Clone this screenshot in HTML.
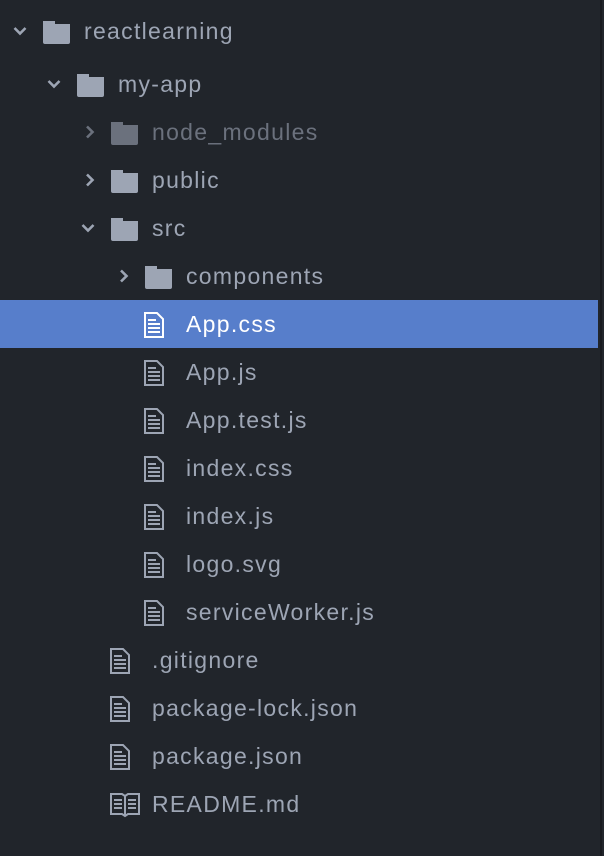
<!DOCTYPE html>
<html><head><style>
body{margin:0;width:604px;height:856px;background:#21252b;overflow:hidden;position:relative;font-family:"Liberation Sans",sans-serif;}
.border{position:absolute;left:600px;top:0;width:2px;height:856px;background:#181a1f}
.r{position:absolute;left:0;width:598px;height:48px;}
.r.sel{background:#577ecb}
.r span.t{position:absolute;top:0;line-height:48px;font-size:23px;color:#9da5b4;letter-spacing:1.3px}
.sel span.t{color:#fff}
.dim span.t{color:#6b717d}
.r svg{position:absolute}
</style></head><body>
<div class="border"></div>
<svg width="0" height="0" style="position:absolute">
<defs>
<symbol id="fold" viewBox="0 0 28 24"><path d="M1 4h27v18a2 2 0 0 1-2 2H3a2 2 0 0 1-2-2z M2 1h10v3H2z" fill="currentColor"/><path d="M1.5 4V1.5h11V4" fill="none" stroke="currentColor" stroke-width="1"/></symbol>
<symbol id="file" viewBox="0 0 20 26"><path d="M1 1h12l6 6v18H1z" fill="none" stroke="currentColor" stroke-width="2"/><path d="M4 8h8M4 12h12M4 16h12M4 20h12" stroke="currentColor" stroke-width="2"/></symbol>
<symbol id="book" viewBox="0 0 30 26"><path d="M1 2h11l3 2 3-2h11v20H18l-3 2-3-2H1z M15 4v20" fill="none" stroke="currentColor" stroke-width="2"/><path d="M4 8h8M4 12h8M4 16h8M18 8h8M18 12h8M18 16h8" stroke="currentColor" stroke-width="2"/></symbol>
<symbol id="down" viewBox="0 0 14 10"><path d="M1.5 2l5.5 5.5 5.5-5.5" fill="none" stroke="currentColor" stroke-width="2.6"/></symbol>
<symbol id="right" viewBox="0 0 10 14"><path d="M2 1.5l5.5 5.5-5.5 5.5" fill="none" stroke="currentColor" stroke-width="2.6"/></symbol>
</defs></svg>

<div class="r" style="top:7px"><svg style="left:13px;top:19px;color:#9da5b4" width="14" height="10"><use href="#down"/></svg><svg style="left:42px;top:13px;color:#9da5b4" width="28" height="24"><use href="#fold"/></svg><span class="t" style="left:84px">reactlearning</span></div>
<div class="r" style="top:60px"><svg style="left:47px;top:19px;color:#9da5b4" width="14" height="10"><use href="#down"/></svg><svg style="left:76px;top:13px;color:#9da5b4" width="28" height="24"><use href="#fold"/></svg><span class="t" style="left:118px">my-app</span></div>
<div class="r dim" style="top:108px"><svg style="left:85px;top:17px;color:#6b717d" width="10" height="14"><use href="#right"/></svg><svg style="left:110px;top:13px;color:#6b717d" width="28" height="24"><use href="#fold"/></svg><span class="t" style="left:152px">node_modules</span></div>
<div class="r" style="top:156px"><svg style="left:85px;top:17px;color:#9da5b4" width="10" height="14"><use href="#right"/></svg><svg style="left:110px;top:13px;color:#9da5b4" width="28" height="24"><use href="#fold"/></svg><span class="t" style="left:152px">public</span></div>
<div class="r" style="top:204px"><svg style="left:81px;top:19px;color:#9da5b4" width="14" height="10"><use href="#down"/></svg><svg style="left:110px;top:13px;color:#9da5b4" width="28" height="24"><use href="#fold"/></svg><span class="t" style="left:152px">src</span></div>
<div class="r" style="top:252px"><svg style="left:119px;top:17px;color:#9da5b4" width="10" height="14"><use href="#right"/></svg><svg style="left:144px;top:13px;color:#9da5b4" width="28" height="24"><use href="#fold"/></svg><span class="t" style="left:186px">components</span></div>
<div class="r sel" style="top:300px"><svg style="left:144px;top:12px;color:#fff" width="20" height="26"><use href="#file"/></svg><span class="t" style="left:186px">App.css</span></div>
<div class="r" style="top:348px"><svg style="left:144px;top:12px;color:#9da5b4" width="20" height="26"><use href="#file"/></svg><span class="t" style="left:186px">App.js</span></div>
<div class="r" style="top:396px"><svg style="left:144px;top:12px;color:#9da5b4" width="20" height="26"><use href="#file"/></svg><span class="t" style="left:186px">App.test.js</span></div>
<div class="r" style="top:444px"><svg style="left:144px;top:12px;color:#9da5b4" width="20" height="26"><use href="#file"/></svg><span class="t" style="left:186px">index.css</span></div>
<div class="r" style="top:492px"><svg style="left:144px;top:12px;color:#9da5b4" width="20" height="26"><use href="#file"/></svg><span class="t" style="left:186px">index.js</span></div>
<div class="r" style="top:540px"><svg style="left:144px;top:12px;color:#9da5b4" width="20" height="26"><use href="#file"/></svg><span class="t" style="left:186px">logo.svg</span></div>
<div class="r" style="top:588px"><svg style="left:144px;top:12px;color:#9da5b4" width="20" height="26"><use href="#file"/></svg><span class="t" style="left:186px">serviceWorker.js</span></div>
<div class="r" style="top:636px"><svg style="left:110px;top:12px;color:#9da5b4" width="20" height="26"><use href="#file"/></svg><span class="t" style="left:152px">.gitignore</span></div>
<div class="r" style="top:684px"><svg style="left:110px;top:12px;color:#9da5b4" width="20" height="26"><use href="#file"/></svg><span class="t" style="left:152px">package-lock.json</span></div>
<div class="r" style="top:732px"><svg style="left:110px;top:12px;color:#9da5b4" width="20" height="26"><use href="#file"/></svg><span class="t" style="left:152px">package.json</span></div>
<div class="r" style="top:780px"><svg style="left:110px;top:12px;color:#9da5b4" width="30" height="26"><use href="#book"/></svg><span class="t" style="left:152px">README.md</span></div>
</body></html>
